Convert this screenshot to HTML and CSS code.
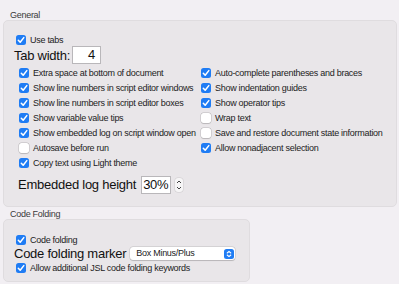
FILE: index.html
```html
<!DOCTYPE html>
<html lang="en">
<head>
    <meta charset="UTF-8">
    <title>Script Editor Preferences</title>
    <link rel="stylesheet" href="styles.css">
</head>
<body>
    <!-- General -->
    <div class="group-title">General</div>
    <div class="panel general">
        <label class="check top"><span class="box on"><svg viewBox="0 0 10 10"><path d="M2.3 5.2 L4.2 7.3 L7.8 2.6"/></svg></span>Use tabs</label>

        <div class="big-row tab-row">
            <span class="big">Tab width:</span>
            <span class="field tab-field">4</span>
        </div>

        <div class="options">
            <label class="check"><span class="box on"><svg viewBox="0 0 10 10"><path d="M2.3 5.2 L4.2 7.3 L7.8 2.6"/></svg></span>Extra space at bottom of document</label>
            <label class="check"><span class="box on"><svg viewBox="0 0 10 10"><path d="M2.3 5.2 L4.2 7.3 L7.8 2.6"/></svg></span>Auto-complete parentheses and braces</label>
            <label class="check"><span class="box on"><svg viewBox="0 0 10 10"><path d="M2.3 5.2 L4.2 7.3 L7.8 2.6"/></svg></span>Show line numbers in script editor windows</label>
            <label class="check"><span class="box on"><svg viewBox="0 0 10 10"><path d="M2.3 5.2 L4.2 7.3 L7.8 2.6"/></svg></span>Show indentation guides</label>
            <label class="check"><span class="box on"><svg viewBox="0 0 10 10"><path d="M2.3 5.2 L4.2 7.3 L7.8 2.6"/></svg></span>Show line numbers in script editor boxes</label>
            <label class="check"><span class="box on"><svg viewBox="0 0 10 10"><path d="M2.3 5.2 L4.2 7.3 L7.8 2.6"/></svg></span>Show operator tips</label>
            <label class="check"><span class="box on"><svg viewBox="0 0 10 10"><path d="M2.3 5.2 L4.2 7.3 L7.8 2.6"/></svg></span>Show variable value tips</label>
            <label class="check"><span class="box"></span>Wrap text</label>
            <label class="check"><span class="box on"><svg viewBox="0 0 10 10"><path d="M2.3 5.2 L4.2 7.3 L7.8 2.6"/></svg></span>Show embedded log on script window open</label>
            <label class="check"><span class="box"></span>Save and restore document state information</label>
            <label class="check"><span class="box"></span>Autosave before run</label>
            <label class="check"><span class="box on"><svg viewBox="0 0 10 10"><path d="M2.3 5.2 L4.2 7.3 L7.8 2.6"/></svg></span>Allow nonadjacent selection</label>
            <label class="check"><span class="box on"><svg viewBox="0 0 10 10"><path d="M2.3 5.2 L4.2 7.3 L7.8 2.6"/></svg></span>Copy text using Light theme</label>
        </div>

        <div class="big-row log-row">
            <span class="big">Embedded log height</span>
            <span class="field log-field">30%</span>
            <span class="stepper">
                <svg viewBox="0 0 8 14"><path d="M2 5 L4 3 L6 5 M2 9 L4 11 L6 9"/></svg>
            </span>
        </div>
    </div>

    <!-- Code Folding -->
    <div class="group-title second">Code Folding</div>
    <div class="panel folding">
        <label class="check top"><span class="box on"><svg viewBox="0 0 10 10"><path d="M2.3 5.2 L4.2 7.3 L7.8 2.6"/></svg></span>Code folding</label>

        <div class="big-row marker-row">
            <span class="big">Code folding marker</span>
            <span class="select">
                Box Minus/Plus
                <span class="select-arrows">
                    <svg viewBox="0 0 10 10"><path d="M3.2 4 L5 2.4 L6.8 4 M3.2 6 L5 7.6 L6.8 6"/></svg>
                </span>
            </span>
        </div>

        <label class="check top"><span class="box on"><svg viewBox="0 0 10 10"><path d="M2.3 5.2 L4.2 7.3 L7.8 2.6"/></svg></span>Allow additional JSL code folding keywords</label>
    </div>
</body>
</html>
```

FILE: styles.css
```css
/* Reset */
* {
    margin: 0;
    padding: 0;
    box-sizing: border-box;
}

body {
    font-family: 'Liberation Sans', Arial, sans-serif;
    font-size: 9px;
    letter-spacing: -0.28px;
    color: #222;
    background-color: #f2eff3;
    padding: 0 2px 0 3px;
}

/* Section titles */
.group-title {
    height: 20px;
    line-height: 10px;
    padding: 10px 0 0 7px;
    color: #3a3a3a;
}

.group-title.second {
    height: 12px;
    padding-top: 2px;
}

.panel {
    background-color: #e9e6e9;
    border: 1px solid #dfdcdf;
    border-radius: 5px;
}

.general {
    padding: 13px 0 14px 12px;
    height: 187px;
}

.folding {
    width: 247px;
    height: 63px;
    padding: 14px 0 0 12px;
}

/* Checkboxes */
.check {
    display: flex;
    align-items: center;
    gap: 4px;
    height: 12px;
    white-space: nowrap;
}

.box {
    width: 10px;
    height: 10px;
    border-radius: 2.5px;
    background-color: #fff;
    box-shadow: 0 0 0 0.5px rgba(0, 0, 0, 0.18), 0 0.5px 1px rgba(0, 0, 0, 0.12);
    flex-shrink: 0;
    display: flex;
}

.box.on {
    background-color: #1f7cf4;
    box-shadow: none;
}

.box svg {
    width: 10px;
    height: 10px;
    fill: none;
    stroke: #fff;
    stroke-width: 1.5;
    stroke-linecap: round;
    stroke-linejoin: round;
}

/* Big label rows */
.big-row {
    display: flex;
    align-items: center;
}

.big {
    font-size: 13px;
    letter-spacing: -0.25px;
    color: #111;
}

.tab-row {
    height: 18px;
    margin-left: -2px;
    gap: 2px;
}

.field {
    background-color: #fff;
    border: 1px solid #b9b7ba;
    height: 18px;
    font-size: 13px;
    line-height: 16px;
    color: #111;
    display: block;
}

.tab-field {
    width: 29px;
    text-align: right;
    padding-right: 5px;
}

/* Two column checkbox grid */
.options {
    display: grid;
    grid-template-columns: 182px auto;
    grid-auto-rows: 15.1px;
    align-items: center;
    margin: 1px 0 0 3px;
}

.log-row {
    margin: 5px 0 0 2px;
    height: 18px;
}

.log-field {
    width: 30px;
    margin-left: 5px;
    padding-left: 1px;
}

.stepper {
    width: 8px;
    height: 14px;
    margin-left: 4px;
    background-color: #f6f5f6;
    border-radius: 3px;
    box-shadow: 0 0 0 0.5px rgba(0, 0, 0, 0.12);
    display: flex;
}

.stepper svg {
    width: 8px;
    height: 14px;
    fill: none;
    stroke: #444;
    stroke-width: 1;
}

/* Select */
.marker-row {
    height: 15px;
    margin: 0 0 0 -2px;
}

.select {
    position: relative;
    width: 105px;
    height: 13px;
    margin-left: 4px;
    padding-left: 6px;
    background-color: #fff;
    border-radius: 3px;
    box-shadow: 0 0 0 0.5px rgba(0, 0, 0, 0.15), 0 0.5px 1px rgba(0, 0, 0, 0.15);
    font-size: 9px;
    line-height: 13px;
    color: #222;
}

.select-arrows {
    position: absolute;
    right: 1px;
    top: 1.5px;
    width: 10px;
    height: 10px;
    border-radius: 2.5px;
    background-color: #1f7cf4;
    display: flex;
}

.select-arrows svg {
    width: 10px;
    height: 10px;
    fill: none;
    stroke: #fff;
    stroke-width: 1.1;
    stroke-linecap: round;
    stroke-linejoin: round;
}

.folding .check.top:last-child {
    margin-top: 1px;
}
```
